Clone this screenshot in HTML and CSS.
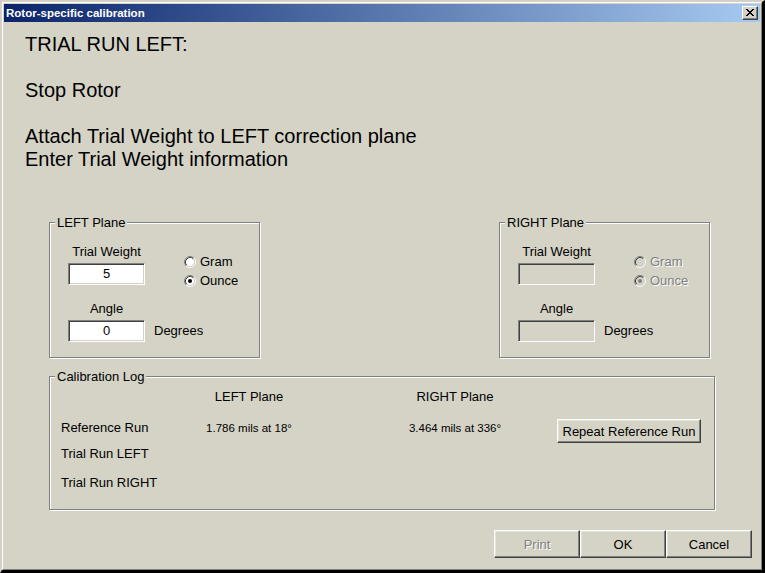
FILE: index.html
```html
<!DOCTYPE html>
<html>
<head>
<meta charset="utf-8">
<link rel="stylesheet" href="styles.css">
</head>
<body>
<div class="window">
  <div class="frame">
    <div class="titlebar">
      <span class="title">Rotor-specific calibration</span>
      <span class="close">
        <svg width="8" height="7" viewBox="0 0 8 7"><path d="M0 0h2v1h1v1h2v-1h1v-1h2v1h-1v1h-1v1h-1v1h1v1h1v1h1v1h-2v-1h-1v-1h-2v1h-1v1h-2v-1h1v-1h1v-1h1v-1h-1v-1h-1v-1h-1z" fill="#000"/></svg>
      </span>
    </div>
    <div class="body">
      <div class="instructions">
        <p class="step">TRIAL RUN LEFT:</p>
        <p class="step">Stop Rotor</p>
        <p class="step">Attach Trial Weight to LEFT correction plane<br>Enter Trial Weight information</p>
      </div>

      <div class="planes">
        <fieldset class="group plane">
          <legend>LEFT Plane</legend>
          <div class="plane-grid">
            <div class="field">
              <div class="field-label">Trial Weight</div>
              <div class="input">5</div>
            </div>
            <div class="radios">
              <div class="radio">
                <svg class="radio-icon" width="12" height="12" viewBox="0 0 12 12"><circle cx="6" cy="6" r="4.2" fill="#fff"/><path d="M2.11 9.89A5.5 5.5 0 0 1 9.89 2.11" fill="none" stroke="#808080"/><path d="M9.89 2.11A5.5 5.5 0 0 1 2.11 9.89" fill="none" stroke="#fff"/><path d="M2.82 9.18A4.5 4.5 0 0 1 9.18 2.82" fill="none" stroke="#404040"/><path d="M9.18 2.82A4.5 4.5 0 0 1 2.82 9.18" fill="none" stroke="#d4d0c8"/></svg>
                <span>Gram</span>
              </div>
              <div class="radio">
                <svg class="radio-icon" width="12" height="12" viewBox="0 0 12 12"><circle cx="6" cy="6" r="4.2" fill="#fff"/><path d="M2.11 9.89A5.5 5.5 0 0 1 9.89 2.11" fill="none" stroke="#808080"/><path d="M9.89 2.11A5.5 5.5 0 0 1 2.11 9.89" fill="none" stroke="#fff"/><path d="M2.82 9.18A4.5 4.5 0 0 1 9.18 2.82" fill="none" stroke="#404040"/><path d="M9.18 2.82A4.5 4.5 0 0 1 2.82 9.18" fill="none" stroke="#d4d0c8"/><circle cx="6" cy="6" r="2" fill="#000"/></svg>
                <span>Ounce</span>
              </div>
            </div>
            <div class="field">
              <div class="field-label">Angle</div>
              <div class="input">0</div>
            </div>
            <div class="unit">Degrees</div>
          </div>
        </fieldset>

        <fieldset class="group plane plane-right">
          <legend>RIGHT Plane</legend>
          <div class="plane-grid">
            <div class="field">
              <div class="field-label">Trial Weight</div>
              <div class="input input-disabled"></div>
            </div>
            <div class="radios">
              <div class="radio radio-disabled">
                <svg class="radio-icon" width="12" height="12" viewBox="0 0 12 12"><circle cx="6" cy="6" r="4.2" fill="#d4d3c6"/><path d="M2.11 9.89A5.5 5.5 0 0 1 9.89 2.11" fill="none" stroke="#808080"/><path d="M9.89 2.11A5.5 5.5 0 0 1 2.11 9.89" fill="none" stroke="#fff"/><path d="M2.82 9.18A4.5 4.5 0 0 1 9.18 2.82" fill="none" stroke="#404040"/><path d="M9.18 2.82A4.5 4.5 0 0 1 2.82 9.18" fill="none" stroke="#d4d0c8"/></svg>
                <span>Gram</span>
              </div>
              <div class="radio radio-disabled">
                <svg class="radio-icon" width="12" height="12" viewBox="0 0 12 12"><circle cx="6" cy="6" r="4.2" fill="#d4d3c6"/><path d="M2.11 9.89A5.5 5.5 0 0 1 9.89 2.11" fill="none" stroke="#808080"/><path d="M9.89 2.11A5.5 5.5 0 0 1 2.11 9.89" fill="none" stroke="#fff"/><path d="M2.82 9.18A4.5 4.5 0 0 1 9.18 2.82" fill="none" stroke="#404040"/><path d="M9.18 2.82A4.5 4.5 0 0 1 2.82 9.18" fill="none" stroke="#d4d0c8"/><circle cx="6" cy="6" r="2" fill="#808080"/></svg>
                <span>Ounce</span>
              </div>
            </div>
            <div class="field">
              <div class="field-label">Angle</div>
              <div class="input input-disabled"></div>
            </div>
            <div class="unit">Degrees</div>
          </div>
        </fieldset>
      </div>

      <fieldset class="group log">
        <legend>Calibration Log</legend>
        <div class="log-inner">
          <div class="log-row log-head">
            <div class="col-label"></div>
            <div class="col-left">LEFT Plane</div>
            <div class="col-right">RIGHT Plane</div>
          </div>
          <div class="log-row log-ref">
            <div class="col-label">Reference Run</div>
            <div class="col-left value">1.786 mils at 18°</div>
            <div class="col-right value">3.464 mils at 336°</div>
            <button class="btn btn-repeat">Repeat Reference Run</button>
          </div>
          <div class="log-row log-trial-left">
            <div class="col-label">Trial Run LEFT</div>
          </div>
          <div class="log-row log-trial-right">
            <div class="col-label">Trial Run RIGHT</div>
          </div>
        </div>
      </fieldset>

      <div class="actions">
        <button class="btn btn-action btn-disabled">Print</button>
        <button class="btn btn-action">OK</button>
        <button class="btn btn-action">Cancel</button>
      </div>
    </div>
  </div>
</div>
</body>
</html>
```

FILE: styles.css
```css
html, body {
  margin: 0;
  padding: 0;
}
body {
  font-family: "Liberation Sans", Arial, sans-serif;
  font-size: 13px;
  color: #000;
  background: #d4d3c6;
}

.window {
  width: 765px;
  height: 573px;
  box-sizing: border-box;
  border-style: solid;
  border-width: 2px 3px 3px 2px;
  border-color: #d4d0c8 #000 #000 #d4d0c8;
  background: #d4d3c6;
}
.frame {
  height: 100%;
  box-sizing: border-box;
  border: 1px solid;
  border-color: #fff #808080 #808080 #fff;
  padding: 1px;
  display: flex;
  flex-direction: column;
}

.titlebar {
  height: 18px;
  flex: none;
  background: linear-gradient(to right, #0a246a, #a6caf0);
  display: flex;
  align-items: center;
  justify-content: space-between;
  padding: 0 2px;
}
.title {
  color: #fff;
  font-weight: bold;
  font-size: 11.5px;
  line-height: 18px;
}
.close {
  width: 16px;
  height: 14px;
  box-sizing: border-box;
  background: #d4d0c8;
  border: 1px solid;
  border-color: #fff #404040 #404040 #fff;
  box-shadow: inset -1px -1px 0 #808080;
  display: flex;
  align-items: center;
  justify-content: center;
  padding: 0 0 1px 0;
}
.close svg {
  display: block;
}

.body {
  flex: 1;
  display: flex;
  flex-direction: column;
}

.instructions {
  padding: 11px 0 0 21px;
}
.step {
  margin: 23px 0 0 0;
  font-size: 20px;
  line-height: 23px;
}
.step:first-child {
  margin-top: 0;
}

.planes {
  display: flex;
  gap: 239px;
  margin: 44px 0 0 45px;
}

.group {
  margin: 0;
  padding: 0;
  min-width: 0;
  border: 1px solid #808080;
  box-shadow: inset 1px 1px 0 #fff, 1px 1px 0 #fff;
  box-sizing: border-box;
}
.group legend {
  margin-left: 5px;
  padding: 0 2px;
  font-size: 13px;
  line-height: 15px;
  background: #d4d3c6;
}

.plane {
  width: 211px;
}
.plane-grid {
  display: grid;
  grid-template-columns: 77px auto;
  grid-auto-rows: 41px;
  column-gap: 9px;
  row-gap: 16px;
  padding: 14px 0 15px 18px;
}
.field {
  display: flex;
  flex-direction: column;
}
.field-label {
  text-align: center;
  line-height: 15px;
  margin-bottom: 4px;
}
.input {
  width: 77px;
  height: 22px;
  box-sizing: border-box;
  background: #fff;
  border: 1px solid;
  border-color: #808080 #fff #fff #808080;
  box-shadow: inset 1px 1px 0 #404040, inset -1px -1px 0 #d4d0c8;
  text-align: center;
  line-height: 20px;
}
.input-disabled {
  background: #d4d3c6;
}

.radios {
  padding: 8px 0 0 30px;
}
.radio {
  display: flex;
  align-items: center;
  gap: 4px;
  line-height: 19px;
}
.radio-icon {
  display: block;
  flex: none;
}
.radio-disabled span {
  color: #808080;
  text-shadow: 1px 1px 0 #fff;
}

.unit {
  align-self: end;
  line-height: 22px;
}

.log {
  width: 666px;
  margin: 11px 0 0 45px;
}
.log-inner {
  padding: 5px 0 17px 11px;
}
.log-row {
  display: flex;
  align-items: flex-start;
}
.log-head {
  line-height: 15px;
}
.log-ref {
  margin-top: 15px;
  height: 24px;
  line-height: 18px;
}
.log-trial-left {
  margin-top: 2px;
  line-height: 18px;
}
.log-trial-right {
  margin-top: 11px;
  line-height: 18px;
}
.col-label {
  width: 140px;
  flex: none;
}
.col-left {
  width: 96px;
  flex: none;
  text-align: center;
  white-space: nowrap;
}
.col-right {
  width: 104px;
  flex: none;
  margin-left: 106px;
  text-align: center;
  white-space: nowrap;
}
.value {
  font-size: 11.5px;
}

.btn {
  font-family: "Liberation Sans", Arial, sans-serif;
  font-size: 13px;
  color: #000;
  background: #d4d3c6;
  border: 1px solid;
  border-color: #fff #404040 #404040 #fff;
  box-shadow: inset -1px -1px 0 #808080, inset 1px 1px 0 #e4e3d8;
  box-sizing: border-box;
  padding: 0;
  margin: 0;
}
.btn-repeat {
  width: 144px;
  height: 24px;
  margin-left: 50px;
  flex: none;
}

.actions {
  display: flex;
  justify-content: flex-end;
  margin-top: 20px;
  padding-right: 8px;
}
.btn-action {
  width: 86px;
  height: 28px;
}
.btn-disabled {
  color: #808080;
  text-shadow: 1px 1px 0 #fff;
}
```
